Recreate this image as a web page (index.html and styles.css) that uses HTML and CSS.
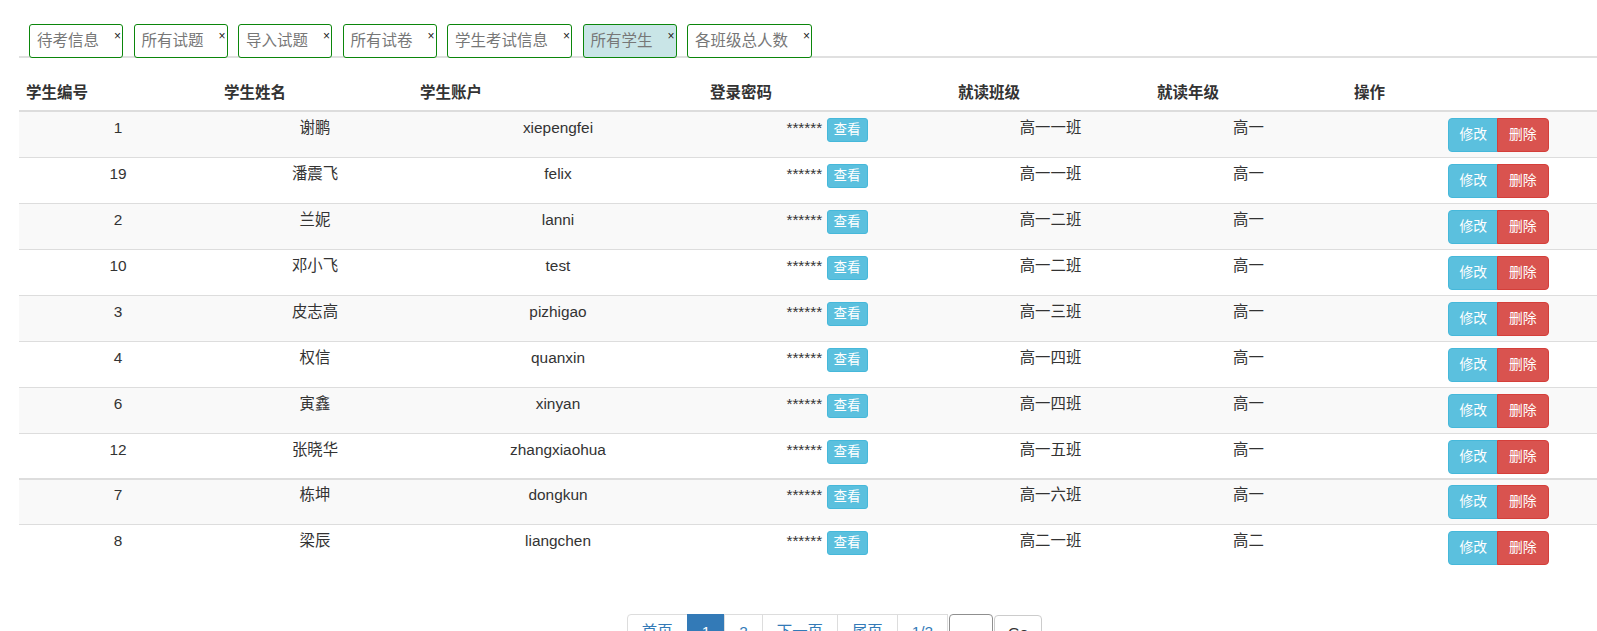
FILE: index.html
```html
<!DOCTYPE html>
<html lang="zh-CN">
<head>
<meta charset="utf-8">
<title>所有学生</title>
<link rel="stylesheet" href="styles.css">
</head>
<body>
<div class="page">
  <ul class="tabs">
    <li class="tab">待考信息<span class="close">×</span></li>
    <li class="tab">所有试题<span class="close">×</span></li>
    <li class="tab">导入试题<span class="close">×</span></li>
    <li class="tab">所有试卷<span class="close">×</span></li>
    <li class="tab">学生考试信息<span class="close">×</span></li>
    <li class="tab active">所有学生<span class="close">×</span></li>
    <li class="tab">各班级总人数<span class="close">×</span></li>
  </ul>

  <table class="grid">
    <colgroup>
      <col class="c1"><col class="c2"><col class="c3"><col class="c4"><col class="c5"><col class="c6"><col>
    </colgroup>
    <thead>
      <tr><th>学生编号</th><th>学生姓名</th><th>学生账户</th><th>登录密码</th><th>就读班级</th><th>就读年级</th><th>操作</th></tr>
    </thead>
    <tbody class="first-body">
      <tr><td>1</td><td>谢鹏</td><td>xiepengfei</td><td>****** <span class="btn-view">查看</span></td><td>高一一班</td><td>高一</td><td><div class="ops"><span class="btn-edit">修改</span><span class="btn-del">删除</span></div></td></tr>
      <tr><td>19</td><td>潘震飞</td><td>felix</td><td>****** <span class="btn-view">查看</span></td><td>高一一班</td><td>高一</td><td><div class="ops"><span class="btn-edit">修改</span><span class="btn-del">删除</span></div></td></tr>
      <tr><td>2</td><td>兰妮</td><td>lanni</td><td>****** <span class="btn-view">查看</span></td><td>高一二班</td><td>高一</td><td><div class="ops"><span class="btn-edit">修改</span><span class="btn-del">删除</span></div></td></tr>
      <tr><td>10</td><td>邓小飞</td><td>test</td><td>****** <span class="btn-view">查看</span></td><td>高一二班</td><td>高一</td><td><div class="ops"><span class="btn-edit">修改</span><span class="btn-del">删除</span></div></td></tr>
      <tr><td>3</td><td>皮志高</td><td>pizhigao</td><td>****** <span class="btn-view">查看</span></td><td>高一三班</td><td>高一</td><td><div class="ops"><span class="btn-edit">修改</span><span class="btn-del">删除</span></div></td></tr>
      <tr><td>4</td><td>权信</td><td>quanxin</td><td>****** <span class="btn-view">查看</span></td><td>高一四班</td><td>高一</td><td><div class="ops"><span class="btn-edit">修改</span><span class="btn-del">删除</span></div></td></tr>
      <tr><td>6</td><td>寅鑫</td><td>xinyan</td><td>****** <span class="btn-view">查看</span></td><td>高一四班</td><td>高一</td><td><div class="ops"><span class="btn-edit">修改</span><span class="btn-del">删除</span></div></td></tr>
      <tr><td>12</td><td>张晓华</td><td>zhangxiaohua</td><td>****** <span class="btn-view">查看</span></td><td>高一五班</td><td>高一</td><td><div class="ops"><span class="btn-edit">修改</span><span class="btn-del">删除</span></div></td></tr>
    </tbody>
    <tbody class="second">
      <tr><td>7</td><td>栋坤</td><td>dongkun</td><td>****** <span class="btn-view">查看</span></td><td>高一六班</td><td>高一</td><td><div class="ops"><span class="btn-edit">修改</span><span class="btn-del">删除</span></div></td></tr>
      <tr><td>8</td><td>梁辰</td><td>liangchen</td><td>****** <span class="btn-view">查看</span></td><td>高二一班</td><td>高二</td><td><div class="ops"><span class="btn-edit">修改</span><span class="btn-del">删除</span></div></td></tr>
    </tbody>
  </table>

  <div class="pager">
    <ul class="pagination">
      <li><a class="first">首页</a></li>
      <li><a class="current">1</a></li>
      <li><a>2</a></li>
      <li><a>下一页</a></li>
      <li><a>尾页</a></li>
      <li><a>1/2</a></li>
    </ul>
    <input class="page-input" type="text" value="">
    <button class="go" type="button">Go</button>
  </div>
</div>
</body>
</html>
```

FILE: styles.css
```css
html, body {
  margin: 0;
  padding: 0;
  overflow: hidden;
  background: #fff;
}

body {
  font-family: "Liberation Sans", "Noto Sans CJK SC", sans-serif;
  font-size: 15.4px;
  color: #333;
}

.page {
  margin-left: 19px;
  width: 1631px;
}

/* ---------- tabs ---------- */
.tabs {
  list-style: none;
  margin: 24px 0 0;
  padding: 0 0 0 10px;
  display: flex;
  gap: 10.5px;
  height: 32px;
  border-bottom: 2px solid #e0e0e0;
}

.tab {
  position: relative;
  flex-shrink: 0;
  box-sizing: border-box;
  height: 34px;
  padding: 0 23px 0 7px;
  border: 1px solid #0b860b;
  border-radius: 3px;
  background: #fff;
  color: #777;
  font-size: 15.5px;
  line-height: 32px;
  white-space: nowrap;
}

.tab.active {
  background: #c9e5e7;
}

.tab .close {
  position: absolute;
  top: 5px;
  right: 1px;
  font-size: 12px;
  line-height: 12px;
  color: #222;
}

/* ---------- table ---------- */
.grid {
  width: 100%;
  border-collapse: collapse;
  border-spacing: 0;
  table-layout: fixed;
}

.c1 { width: 198px; }
.c2 { width: 196px; }
.c3 { width: 290px; }
.c4 { width: 248px; }
.c5 { width: 199px; }
.c6 { width: 197px; }

.grid th {
  text-align: left;
  font-weight: bold;
  font-size: 15.5px;
  line-height: 20px;
  padding: 25px 7px 7px;
  border-bottom: 2px solid #ddd;
  color: #333;
  white-space: nowrap;
}

.grid td {
  text-align: center;
  vertical-align: top;
  padding: 6px 7px 5px;
  line-height: 20px;
  border-top: 1px solid #ddd;
  white-space: nowrap;
}

.grid tbody tr:nth-child(odd) td {
  background: #f9f9f9;
}

.grid tbody.first-body tr:last-child td {
  padding-bottom: 4px;
}

.grid tbody.second tr:first-child td {
  border-top: 2px solid #ddd;
  padding-top: 5px;
}

.btn-view {
  display: inline-block;
  vertical-align: top;
  box-sizing: border-box;
  height: 24px;
  padding: 2px 6px;
  border: 1px solid #46b8da;
  border-radius: 3px;
  background: #5bc0de;
  color: #fff;
  font-size: 13.5px;
  line-height: 18px;
}

.ops {
  display: inline-flex;
  vertical-align: top;
}

.btn-edit,
.btn-del {
  box-sizing: border-box;
  height: 34px;
  padding: 6px 10px;
  border: 1px solid;
  color: #fff;
  font-size: 13.8px;
  line-height: 20px;
}

.btn-edit {
  background: #5bc0de;
  border-color: #46b8da;
  border-radius: 4px 0 0 4px;
}

.btn-del {
  padding: 6px 11px;
  background: #d9534f;
  border-color: #d43f3a;
  border-radius: 0 4px 4px 0;
  margin-left: -1px;
}

/* ---------- pagination ---------- */
.pager {
  display: flex;
  justify-content: center;
  align-items: flex-start;
  margin-top: 44px;
}

.pagination {
  list-style: none;
  margin: 0;
  padding: 0;
  display: flex;
}

.pagination a {
  display: block;
  padding: 6px 14px;
  line-height: 22px;
  border: 1px solid #ddd;
  margin-left: -1px;
  color: #337ab7;
  background: #fff;
  white-space: nowrap;
}

.pagination a.first {
  margin-left: 0;
  border-radius: 4px 0 0 4px;
}

.pagination a.current {
  background: #337ab7;
  border-color: #337ab7;
  color: #fff;
}

.page-input {
  box-sizing: border-box;
  width: 44px;
  height: 36px;
  margin: 0 0 0 1px;
  border: 1px solid #8f8f8f;
  border-radius: 4px;
  padding: 0 4px;
  font: inherit;
}

.go {
  box-sizing: border-box;
  width: 48px;
  height: 36px;
  margin: 1px 0 0 1px;
  border: 1px solid #ccc;
  border-radius: 4px;
  background: #fff;
  color: #333;
  font: inherit;
}
```
